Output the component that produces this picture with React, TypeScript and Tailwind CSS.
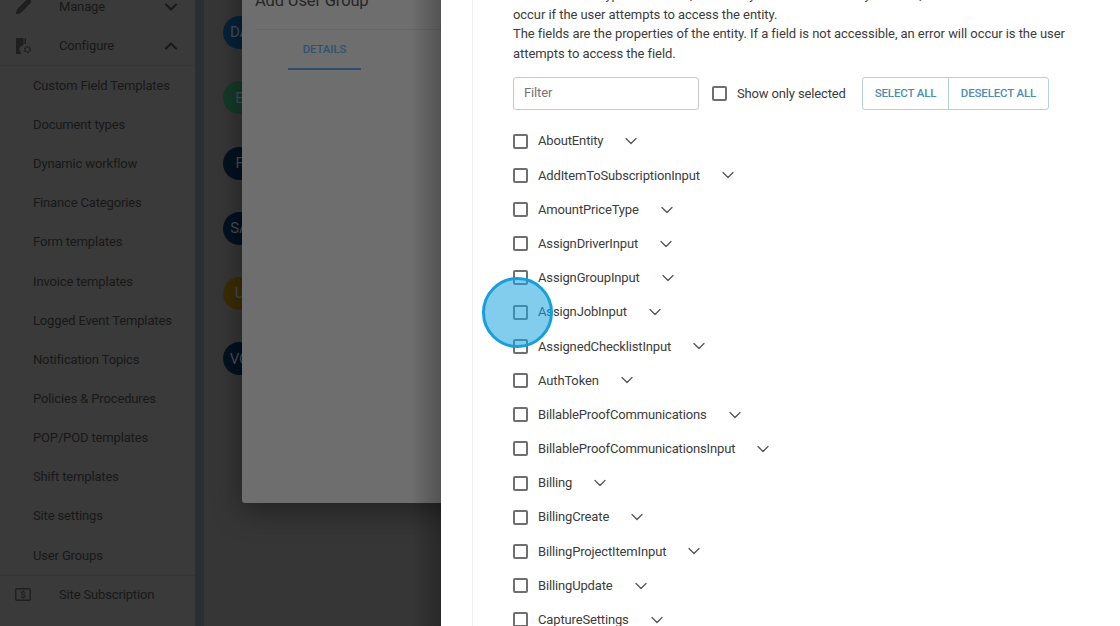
import React from "react";
import { ChevronDown, ChevronUp, Pencil } from "lucide-react";

const menu = ["Custom Field Templates","Document types","Dynamic workflow","Finance Categories","Form templates","Invoice templates","Logged Event Templates","Notification Topics","Policies & Procedures","POP/POD templates","Shift templates","Site settings","User Groups"];
const items = ["AboutEntity","AddItemToSubscriptionInput","AmountPriceType","AssignDriverInput","AssignGroupInput","AssignJobInput","AssignedChecklistInput","AuthToken","BillableProofCommunications","BillableProofCommunicationsInput","Billing","BillingCreate","BillingProjectItemInput","BillingUpdate","CaptureSettings"];
const avatars: [string, string][] = [["DA","bg-[#062238]"],["E","bg-[#143a29]"],["F","bg-[#02121f]"],["SA","bg-[#02121f]"],["U","bg-[#3a2d05]"],["VO","bg-[#02121f]"]];

export default function App() {
  return (
    <div className="relative flex h-[626px] w-[1120px] overflow-hidden bg-white font-['Roboto','Liberation_Sans',sans-serif] text-[13px] tracking-[-0.15px]">
      <aside className="flex h-full w-[195px] shrink-0 flex-col bg-[#3a3a3a] text-[#181818]">
        <div className="-mt-[13.5px] flex h-[40px] shrink-0 items-center">
          <Pencil className="ml-[15px] h-[17px] w-[17px] fill-[#1f1f1f] text-[#1f1f1f]" strokeWidth={1.5} />
          <span className="ml-[27px] flex-1">Manage</span>
          <ChevronDown className="mr-[14px] h-[20px] w-[20px]" strokeWidth={2.4} />
        </div>
        <div className="flex h-[39.5px] shrink-0 items-center border-b border-[#353535]">
          <svg viewBox="0 0 17 16" className="ml-[15px] h-[16px] w-[17px] fill-[#1f1f1f]">
            <path d="M1 0h7.5v7.2a4 4 0 0 0-2.4 7.3V16H1z" />
            <path d="M9.5 0H11v6H9.5z" />
            <circle cx="12.5" cy="11.5" r="2.7" fill="none" stroke="#1f1f1f" strokeWidth="1.7" strokeDasharray="2 0.8" />
          </svg>
          <span className="ml-[27px] flex-1">Configure</span>
          <ChevronUp className="mr-[14px] h-[20px] w-[20px]" strokeWidth={2.4} />
        </div>
        {menu.map((m) => (
          <div key={m} className="flex h-[39.15px] shrink-0 items-center pl-[33px]">{m}</div>
        ))}
        <div className="flex h-[40px] shrink-0 items-center border-t border-[#353535] pb-[2px]">
          <svg viewBox="0 0 16 13" className="ml-[15px] h-[13px] w-[16px] text-[#1f1f1f]">
            <rect x="0.7" y="0.7" width="14.6" height="11.6" rx="1.2" fill="none" stroke="currentColor" strokeWidth="1.4" />
            <text x="8" y="10" fontSize="9" fontWeight="700" textAnchor="middle" fill="currentColor">$</text>
          </svg>
          <span className="ml-[28px]">Site Subscription</span>
        </div>
      </aside>
      <div className="h-full w-[9px] shrink-0 bg-[#2b2f32]" />
      <main className="relative h-full w-[237px] shrink-0 overflow-hidden bg-[#363636]">
        <div className="absolute left-[19px] top-[16px] flex flex-col gap-[32.3px]">
          {avatars.map(([t, c]) => (
            <div key={t} className={`flex h-[33px] w-[33px] items-center justify-center overflow-hidden whitespace-nowrap rounded-full text-[15px] text-[#454e57] ${c}`}>{t}</div>
          ))}
        </div>
        <div className="absolute left-[38px] top-[-40px] h-[543px] w-[240px] rounded-[3px] bg-[#6e6e6e] pl-[13px] shadow-[0_8px_30px_rgba(0,0,0,0.4)]">
          <div className="pt-[31px] text-[16.5px] leading-[20px] text-[#262626]">Add User Group</div>
          <div className="mt-[18px] h-px bg-[#666666]" />
          <div className="ml-[33px] flex h-[40px] w-[73px] items-center justify-center border-b-2 border-[#2f4f6c] pt-[2px] text-[11.5px] font-medium text-[#33526e]">DETAILS</div>
        </div>
        <div className="absolute right-0 top-0 h-full w-[30px] bg-gradient-to-r from-transparent to-black/25" />
      </main>
      <section className="h-full flex-1 bg-white">
        <div className="ml-[31px] h-full overflow-hidden border-l border-[#f0f0f0] pl-[40px] text-[#3c3c3c]">
          <p className="-mt-[15px] whitespace-nowrap leading-[19.6px] tracking-[-0.06px]">
            Entities are the types in the API, if an entity is not accessible by the user, an error will<br />
            occur if the user attempts to access the entity.<br />
            The fields are the properties of the entity. If a field is not accessible, an error will occur is the user<br />
            attempts to access the field.
          </p>
          <div className="mt-[14px] flex h-[33px] items-center">
            <div className="flex h-[33px] w-[186px] items-center rounded-[3px] border border-[#c8c8c8] pb-[2px] pl-[10px] text-[#757575]">Filter</div>
            <div className="ml-[13px] h-[15px] w-[15px] rounded-[2px] border-2 border-[#6f6f6f]" />
            <span className="ml-[10px] w-[112px]">Show only selected</span>
            <div className="ml-[13px] flex h-[33px] rounded-[3px] border border-[#b8d0de] text-[11.5px] font-medium text-[#4f8db3]">
              <div className="flex w-[86px] items-center justify-center border-r border-[#b8d0de]">SELECT ALL</div>
              <div className="flex w-[99px] items-center justify-center">DESELECT ALL</div>
            </div>
          </div>
          <div className="mt-[13.7px]">
            {items.map((it) => (
              <div key={it} className="flex h-[34.2px] items-center">
                <div className="h-[15px] w-[15px] shrink-0 rounded-[2px] border-2 border-[#6f6f6f]" />
                <span className="ml-[10px]">{it}</span>
                <ChevronDown className="ml-[18px] h-[20px] w-[20px] text-[#555555]" strokeWidth={1.5} />
              </div>
            ))}
          </div>
        </div>
      </section>
      <div className="absolute left-[482px] top-[277px] h-[71px] w-[71px] rounded-full border-[3px] border-[#169fdc] bg-[#1ba3e0]/55" />
    </div>
  );
}
